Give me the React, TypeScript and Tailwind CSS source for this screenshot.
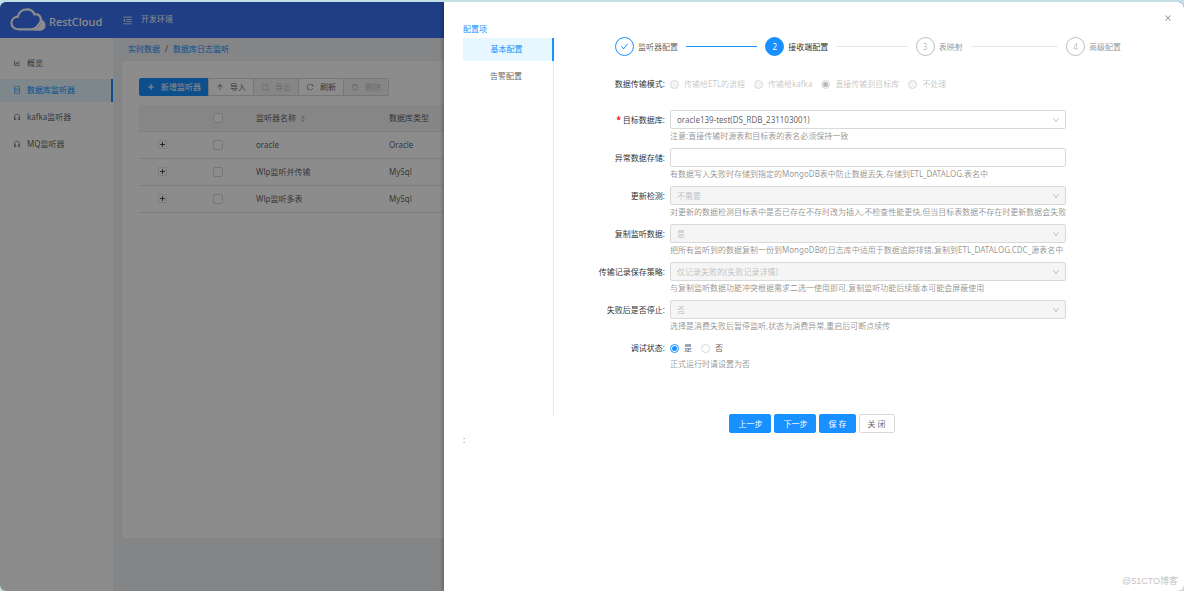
import { useState } from "react"
import type { ReactNode } from "react"
import clsx from "clsx"
import type { IconType } from "react-icons"
import {
  AiOutlineArrowUp,
  AiOutlineBarChart,
  AiOutlineCheck,
  AiOutlineClose,
  AiOutlineCustomerService,
  AiOutlineDatabase,
  AiOutlineDelete,
  AiOutlineDown,
  AiOutlineExport,
  AiOutlineMenuFold,
  AiOutlineReload,
  AiFillCaretDown,
  AiFillCaretUp,
} from "react-icons/ai"

const menu: { label: string; icon: IconType; active?: boolean }[] = [
  { label: "概览", icon: AiOutlineBarChart },
  { label: "数据库监听器", icon: AiOutlineDatabase, active: true },
  { label: "kafka监听器", icon: AiOutlineCustomerService },
  { label: "MQ监听器", icon: AiOutlineCustomerService },
]

const rows = [
  { name: "oracle", type: "Oracle" },
  { name: "Wlp监听并传输", type: "MySql" },
  { name: "Wlp监听多表", type: "MySql" },
]

const modes = ["传输给ETL的流程", "传输给kafka", "直接传输到目标库", "不处理"]

const steps = ["监听器配置", "接收端配置", "表映射", "高级配置"]

function Logo() {
  return (
    <svg viewBox="0 0 36 24" className="h-6 w-9" fill="none">
      <path
        d="M8.5 21.3h13.2c2.6 0 4.3-1.2 5.9-3.4l3.2-4.6c.6-6-3-7.500-6.300-6.900C23.300 3.200 19.900 1.300 16.500 1.400c-4.400.1-8 3-8.700 7.300C4.200 9 1.400 11.600 1.400 15c0 3.600 3 6.300 7.100 6.300Z"
        stroke="#fff"
        strokeWidth="2.200"
      />
      <path
        d="M22 22.800c4-1 6.200-3.400 8-6.300 1-1.600 1.400-3.600 1.500-5.300 2.500 1.300 4 3.500 4 6.100 0 3.200-2.400 5.500-5.600 5.500H22Z"
        fill="#fff"
      />
    </svg>
  )
}

function Plus({ className }: { className?: string }) {
  return (
    <svg viewBox="0 0 7 7" className={className} stroke="currentColor" strokeWidth="1">
      <path d="M3.5 1v5M1 3.500h5" />
    </svg>
  )
}

function Header() {
  return (
    <header className="flex h-9 shrink-0 items-center bg-[#3a72f2] text-white">
      <div className="flex w-[122px] items-center gap-[3px] pl-2.5">
        <Logo />
        <span className="pt-1 text-[11px] font-medium leading-4">RestCloud</span>
      </div>
      <button type="button" aria-label="收起菜单">
        <AiOutlineMenuFold className="size-[11px]" />
      </button>
      <span className="ml-2 pb-0.5">开发环境</span>
    </header>
  )
}

function Sidebar() {
  return (
    <nav className="flex w-[113px] shrink-0 flex-col gap-1 bg-white pt-3.5">
      {menu.map(({ label, icon: Icon, active }) => (
        <a
          key={label}
          href="#"
          className={clsx(
            "flex h-[23px] items-center gap-1.5 border-r-2 pb-0.5 pl-[13px]",
            active ? "border-[#1890ff] bg-[#e6f7ff] text-[#1890ff]" : "border-transparent"
          )}
        >
          <Icon className="size-2" />
          {label}
        </a>
      ))}
    </nav>
  )
}

function ToolButton({
  icon: Icon,
  children,
  variant = "default",
}: {
  icon: IconType | typeof Plus
  children: ReactNode
  variant?: "primary" | "default" | "disabled"
}) {
  return (
    <button
      type="button"
      disabled={variant === "disabled"}
      className={clsx(
        "flex h-[18px] items-center gap-1.5 border px-[7px] first:rounded-l-xs last:rounded-r-xs",
        variant === "primary" && "border-[#1890ff] bg-[#1890ff] text-white",
        variant === "default" && "border-[#d9d9d9] bg-white",
        variant === "disabled" && "border-[#d9d9d9] bg-[#f5f5f5] text-black/25"
      )}
    >
      <Icon className="size-2" />
      {children}
    </button>
  )
}

function ListenerTable() {
  return (
    <table className="mt-[9px] w-full table-fixed border-collapse text-left">
      <colgroup>
        <col className="w-[47px]" />
        <col className="w-16" />
        <col className="w-[133px]" />
        <col />
      </colgroup>
      <thead>
        <tr className="h-[26px] border-b border-[#e8e8e8] bg-[#f5f5f5]">
          <th />
          <th>
            <input
              type="checkbox"
              aria-label="全选"
              className="mx-auto block size-2.5 appearance-none rounded-xs border border-[#d9d9d9] bg-white"
            />
          </th>
          <th className="pl-1.5 font-normal">
            <span className="flex items-center gap-1">
              监听器名称
              <span className="flex flex-col pt-0.5 text-[#bfbfbf]">
                <AiFillCaretUp className="size-1.5" />
                <AiFillCaretDown className="-mt-0.5 size-1.5" />
              </span>
            </span>
          </th>
          <th className="pl-1.5 font-normal">数据库类型</th>
        </tr>
      </thead>
      <tbody>
        {rows.map((row) => (
          <tr key={row.name} className="h-[27px] border-b border-[#e8e8e8]">
            <td>
              <button
                type="button"
                aria-label="展开"
                className="mx-auto flex size-[9px] items-center justify-center border border-[#e8e8e8]"
              >
                <Plus className="size-[7px] shrink-0" />
              </button>
            </td>
            <td>
              <input
                type="checkbox"
                aria-label={row.name}
                className="mx-auto block size-2.5 appearance-none rounded-xs border border-[#d9d9d9]"
              />
            </td>
            <td className="pl-1.5">{row.name}</td>
            <td className="pl-1.5">{row.type}</td>
          </tr>
        ))}
      </tbody>
    </table>
  )
}

function ListPage() {
  return (
    <main className="flex flex-1 flex-col bg-[#f0f2f5] px-[9px] pb-[53px]">
      <div className="flex h-[23px] items-center gap-[5px] pb-0.5 pl-1.5">
        <a href="#" className="text-[#1890ff]">
          实时数据
        </a>
        <span>/</span>
        <a href="#" className="text-[#1890ff]">
          数据库日志监听
        </a>
      </div>
      <section className="flex-1 rounded-sm bg-white p-[17px]">
        <div className="flex -space-x-px">
          <ToolButton icon={Plus} variant="primary">
            新增监听器
          </ToolButton>
          <ToolButton icon={AiOutlineArrowUp}>导入</ToolButton>
          <ToolButton icon={AiOutlineExport} variant="disabled">
            导出
          </ToolButton>
          <ToolButton icon={AiOutlineReload}>刷新</ToolButton>
          <ToolButton icon={AiOutlineDelete} variant="disabled">
            删除
          </ToolButton>
        </div>
        <ListenerTable />
      </section>
    </main>
  )
}

function Steps({ current }: { current: number }) {
  return (
    <ol className="mx-11 flex">
      {steps.map((title, i) => {
        const done = i < current
        const active = i === current
        const last = i === steps.length - 1
        return (
          <li key={title} className={clsx("flex items-center", !last && "flex-1")}>
            <span
              className={clsx(
                "mr-1 flex size-[19px] shrink-0 items-center justify-center rounded-full border",
                done && "border-[#1890ff] text-[#1890ff]",
                active && "border-[#1890ff] bg-[#1890ff] text-white",
                !done && !active && "border-black/25 text-black/30"
              )}
            >
              {done ? <AiOutlineCheck className="size-[9px]" /> : i + 1}
            </span>
            <span className={clsx("whitespace-nowrap", active ? "text-black/85" : done ? "text-black/65" : "text-black/45")}>
              {title}
            </span>
            {!last && <span className={clsx("mx-2 h-px flex-1", done ? "bg-[#1890ff]" : "bg-[#e8e8e8]")} />}
          </li>
        )
      })}
    </ol>
  )
}

function Field({
  label,
  id,
  required,
  help,
  children,
}: {
  label: string
  id?: string
  required?: boolean
  help?: string
  children: ReactNode
}) {
  return (
    <div className="grid grid-cols-6">
      <label htmlFor={id} className="flex h-[19px] items-center justify-end whitespace-nowrap pr-[5px] text-black/85">
        {required && <span className="mr-0.5 font-bold text-[#ff0000]">*</span>}
        {label}:
      </label>
      <div className="col-span-4">
        {children}
        {help && <p className="h-[13px] whitespace-nowrap leading-[13px] text-black/45">{help}</p>}
      </div>
    </div>
  )
}

function Select({ id, value, disabled }: { id: string; value: string; disabled?: boolean }) {
  return (
    <div className="relative">
      <select
        id={id}
        disabled={disabled}
        className="block h-[19px] w-full appearance-none rounded-xs border border-[#d9d9d9] bg-white px-1.5 leading-4 text-black/65 disabled:bg-[#f5f5f5] disabled:text-black/25 disabled:opacity-100"
      >
        <option>{value}</option>
      </select>
      <AiOutlineDown className="pointer-events-none absolute right-1.5 top-1.5 size-2 text-black/25" />
    </div>
  )
}

function Radio({
  name,
  label,
  checked,
  disabled,
  onChange,
}: {
  name: string
  label: string
  checked: boolean
  disabled?: boolean
  onChange?: () => void
}) {
  return (
    <label className={clsx("flex items-center gap-[5px]", disabled && "text-black/25")}>
      <input
        type="radio"
        name={name}
        checked={checked}
        disabled={disabled}
        onChange={() => onChange?.()}
        className="mt-0.5 flex size-[9px] appearance-none items-center justify-center rounded-full border border-[#d9d9d9] before:size-[5px] before:rounded-full checked:border-[#1890ff] checked:before:bg-[#1890ff] disabled:border-[#d9d9d9] disabled:bg-[#f5f5f5] disabled:checked:before:bg-black/25"
      />
      {label}
    </label>
  )
}

function ReceiverForm() {
  const [debug, setDebug] = useState("是")

  return (
    <form className="flex flex-col" onSubmit={(e) => e.preventDefault()}>
      <Field label="数据传输模式">
        <div className="mb-[17px] flex h-[19px] items-center gap-[9px]">
          {modes.map((mode) => (
            <Radio key={mode} name="mode" label={mode} checked={mode === "直接传输到目标库"} disabled />
          ))}
        </div>
      </Field>
      <div className="flex flex-col gap-1.5">
        <Field label="目标数据库" id="target" required help="注意:直接传输时源表和目标表的表名必须保持一致">
          <Select id="target" value="oracle139-test(DS_RDB_231103001)" />
        </Field>
        <Field
          label="异常数据存储"
          id="errorStore"
          help="有数据写入失败时存储到指定的MongoDB表中防止数据丢失,存储到ETL_DATALOG.表名中"
        >
          <input id="errorStore" type="text" className="block h-[19px] w-full rounded-xs border border-[#d9d9d9] px-1.5" />
        </Field>
        <Field
          label="更新检测"
          id="updateCheck"
          help="对更新的数据检测目标表中是否已存在不存时改为插入,不检查性能更快,但当目标表数据不存在时更新数据会失败"
        >
          <Select id="updateCheck" value="不需要" disabled />
        </Field>
        <Field
          label="复制监听数据"
          id="copyData"
          help="把所有监听到的数据复制一份到MongoDB的日志库中适用于数据追踪排错,复制到ETL_DATALOG.CDC_源表名中"
        >
          <Select id="copyData" value="是" disabled />
        </Field>
        <Field
          label="传输记录保存策略"
          id="savePolicy"
          help="与复制监听数据功能冲突根据需求二选一使用即可,复制监听功能后续版本可能会屏蔽使用"
        >
          <Select id="savePolicy" value="仅记录失败的(失败记录详情)" disabled />
        </Field>
        <Field label="失败后是否停止" id="stopOnFail" help="选择是消费失败后暂停监听,状态为消费异常,重启后可断点续传">
          <Select id="stopOnFail" value="否" disabled />
        </Field>
        <Field label="调试状态" help="正式运行时请设置为否">
          <div className="flex h-[19px] items-center gap-[9px]">
            {["是", "否"].map((v) => (
              <Radio key={v} name="debug" label={v} checked={debug === v} onChange={() => setDebug(v)} />
            ))}
          </div>
        </Field>
      </div>
      <div className="mt-11 flex justify-center gap-[3px] pr-28">
        {["上一步", "下一步", "保 存"].map((text) => (
          <button key={text} type="button" className="h-[19px] rounded-xs border border-[#1890ff] bg-[#1890ff] px-2 text-white">
            {text}
          </button>
        ))}
        <button type="button" className="h-[19px] rounded-xs border border-[#d9d9d9] bg-white px-2">
          关 闭
        </button>
      </div>
    </form>
  )
}

function Drawer() {
  return (
    <aside className="absolute inset-y-0 right-0 w-5/8 bg-white px-[19px] pt-[19px] shadow-[-1px_0_4px_rgba(0,0,0,0.3)]">
      <button type="button" aria-label="关闭" className="absolute right-3 top-3 text-black/50">
        <AiOutlineClose className="size-2" />
      </button>
      <div className="flex">
        <div className="w-[91px] shrink-0">
          <h2 className="h-[17px] text-[#1890ff]">配置项</h2>
          <nav className="flex min-h-[378px] flex-col gap-1 border-r border-[#e8e8e8]">
            <a
              href="#"
              className="-mr-px flex h-[23px] items-center justify-center border-r-2 border-[#1890ff] bg-[#e6f7ff] pb-0.5 pr-0.5 text-[#1890ff]"
            >
              基本配置
            </a>
            <a href="#" className="flex h-[23px] items-center justify-center pb-0.5 pr-1">
              告警配置
            </a>
          </nav>
          <p className="mt-4">:</p>
        </div>
        <div className="flex flex-1 flex-col gap-[18px] pl-[17px] pt-4">
          <Steps current={1} />
          <ReceiverForm />
        </div>
      </div>
      <span className="absolute bottom-0.5 right-1.5 font-['Liberation_Sans','Noto_Sans_CJK_SC',sans-serif] text-[9px] text-[#c4c4c4]">
        @51CTO博客
      </span>
    </aside>
  )
}

export default function App() {
  return (
    <div className="flex h-screen flex-col bg-[#c3dfe5] pt-0.5 font-['Noto_Sans','Noto_Sans_CJK_SC',sans-serif] text-[8px] leading-4 text-black/65">
      <div className="relative flex flex-1 flex-col overflow-hidden rounded-md">
        <Header />
        <div className="flex flex-1">
          <Sidebar />
          <ListPage />
        </div>
        {/* Mask */}
        <div className="absolute inset-0 bg-black/45" />
        <Drawer />
      </div>
    </div>
  )
}
